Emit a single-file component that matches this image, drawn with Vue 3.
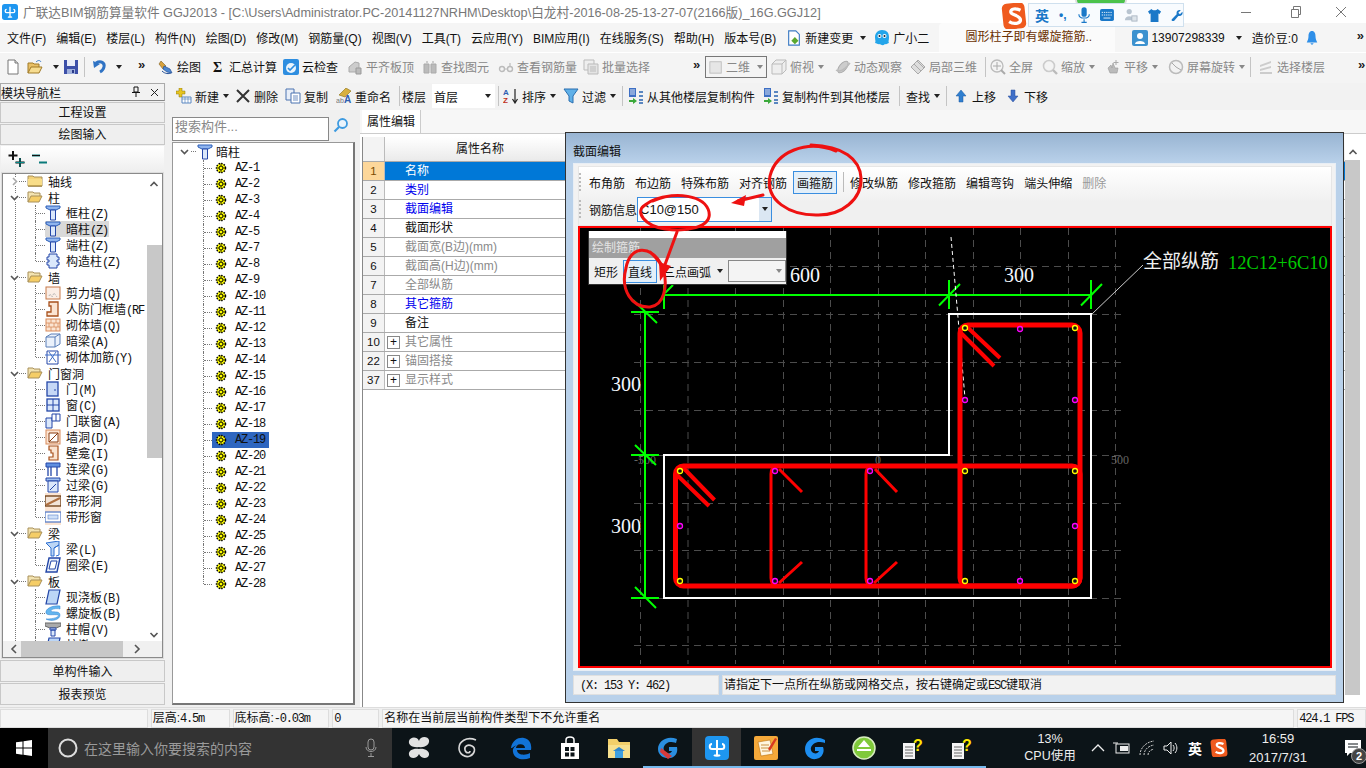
<template>
  <div class="app">
    <svg class="sprite" width="0" height="0">
      <symbol id="doc" viewBox="0 0 16 16"><path d="M3 1h7l3 3v11H3z" fill="#fff" stroke="#777"/><path d="M10 1v3h3" fill="#ddd" stroke="#777"/></symbol>
      <symbol id="open" viewBox="0 0 16 16"><path d="M1 14V4h5l1 1h5v3" fill="#e8c067" stroke="#a07a28"/><path d="M1 14l3-6h11l-3 6z" fill="#f6dc90" stroke="#a07a28"/><path d="M9 3c2-2 4-2 5 0" fill="none" stroke="#3a7bc8"/></symbol>
      <symbol id="save" viewBox="0 0 16 16"><path d="M1 1h14v14H1z" fill="#3c4fa8"/><path d="M4 1h8v6H4z" fill="#e8ecf8"/><path d="M4 10h8v5H4z" fill="#9fb0dc"/><path d="M9 11h2v3H9z" fill="#2a3a88"/></symbol>
      <symbol id="undo" viewBox="0 0 16 16"><path d="M4 4c5-3 9 0 8 4-.5 2-2 4-4 5" fill="none" stroke="#2f73c4" stroke-width="3"/><path d="M1 2l1 7 6-4z" fill="#2f73c4"/></symbol>
      <symbol id="draw" viewBox="0 0 16 16"><path d="M3 2l5 5-3 3-4-5z" fill="#d8a23c" stroke="#7a5a20" stroke-width=".6"/><path d="M6 7l6 3 2 4-5-1-4-3z" fill="#4c86cf" stroke="#234f96" stroke-width=".7"/><path d="M4 12c3 3 7 3 9 2" fill="none" stroke="#234f96"/></symbol>
      <symbol id="cloud" viewBox="0 0 16 16"><rect x="0" y="0" width="16" height="16" rx="2" fill="#2e8ee0"/><circle cx="8" cy="9" r="5" fill="#eaf4fc"/><path d="M5 9l2 2 5-5" fill="none" stroke="#2e8ee0" stroke-width="1.6"/></symbol>
      <symbol id="flat" viewBox="0 0 16 16"><path d="M2 13V8l6-5 4 1v9z" fill="#ccc" stroke="#aaa"/><path d="M9 9h5v6H9z" fill="#bbb" stroke="#999"/></symbol>
      <symbol id="binoc" viewBox="0 0 16 16"><path d="M2 5h5v9H2zM9 5h5v9H9z" fill="#bbb" stroke="#aaa"/><path d="M4 2h2v3H4zM10 2h2v3h-2zM7 6h2v3H7z" fill="#ccc"/></symbol>
      <symbol id="glass" viewBox="0 0 16 16"><circle cx="4" cy="10" r="2.5" fill="none" stroke="#bbb" stroke-width="1.4"/><circle cx="12" cy="10" r="2.5" fill="none" stroke="#bbb" stroke-width="1.4"/><path d="M6 10h3M12 4v4" stroke="#bbb" stroke-width="1.2"/></symbol>
      <symbol id="batch" viewBox="0 0 16 16"><path d="M1 1h10v10H1z" fill="#eee" stroke="#bbb"/><path d="M5 5h10v10H5z" fill="#e4e4e4" stroke="#bbb"/><path d="M7 8h6M7 10h6M7 12h6" stroke="#bbb"/></symbol>
      <symbol id="plane" viewBox="0 0 16 16"><rect x="1" y="2" width="13" height="13" fill="#e6e6e6" stroke="#bbb"/></symbol>
      <symbol id="box3d" viewBox="0 0 16 16"><path d="M1 5l4-4h10v10l-4 4H1z" fill="#eee" stroke="#bbb"/><path d="M1 5h10v10M11 5l4-4" fill="none" stroke="#bbb"/></symbol>
      <symbol id="orbit" viewBox="0 0 16 16"><ellipse cx="8" cy="8" rx="3.5" ry="7" transform="rotate(40 8 8)" fill="#ccc" stroke="#aaa"/><path d="M1 11c4 3 10-2 14-7" fill="none" stroke="#bbb" stroke-width="1.5"/></symbol>
      <symbol id="local" viewBox="0 0 16 16"><path d="M1 8l7-7 7 7-7 7z" fill="#ddd" stroke="#aaa"/><path d="M4 5l7 7M7 2l7 7" stroke="#aaa"/></symbol>
      <symbol id="zfit" viewBox="0 0 16 16"><circle cx="7" cy="7" r="6" fill="#f4f4f4" stroke="#bbb" stroke-width="1.3"/><path d="M7 3v8M3 7h8" stroke="#aaa"/><path d="M11 11l4 4" stroke="#aaa" stroke-width="2"/></symbol>
      <symbol id="zoom" viewBox="0 0 16 16"><circle cx="7" cy="7" r="5.5" fill="#f4f4f4" stroke="#ccc" stroke-width="1.6"/><path d="M11 11l4 4" stroke="#bbb" stroke-width="2.4"/></symbol>
      <symbol id="pan" viewBox="0 0 16 16"><path d="M3 9l3-3 1 3 1-5 2 5 3 0-1 5H5z" fill="#bbb" stroke="#999" stroke-width=".6"/><path d="M11 1v5M8.5 3.500h5" stroke="#aaa"/></symbol>
      <symbol id="rot" viewBox="0 0 16 16"><circle cx="8" cy="8" r="6.500" fill="#f2f2f2" stroke="#bbb" stroke-width="1.500"/><path d="M8 8l5 3M4 4l4 4" stroke="#aaa"/></symbol>
      <symbol id="floor" viewBox="0 0 16 16"><path d="M2 6l11-4v2L2 8zM2 10l11-3v2L2 12zM2 13h12v2H2z" fill="#ccc"/></symbol>
      <symbol id="new" viewBox="0 0 16 16"><path d="M3 0h3v3h3v3H6v3H3V6H0V3h3z" fill="#e6c420" stroke="#8a7410" stroke-width=".5"/><path d="M6 9h9v6H6z" fill="#fff" stroke="#5a86c0"/><path d="M6 11h9M9 9v6M12 9v6" stroke="#5a86c0" stroke-width=".7"/></symbol>
      <symbol id="del" viewBox="0 0 16 16"><path d="M2 2l12 12M14 2L2 14" stroke="#333" stroke-width="2"/></symbol>
      <symbol id="copy" viewBox="0 0 16 16"><path d="M1 1h8v11H1z" fill="#e8eef8" stroke="#4a72b0"/><path d="M6 5h9v10H6z" fill="#fff" stroke="#4a72b0"/><path d="M8 8h5M8 10h5M8 12h5" stroke="#4a72b0" stroke-width=".8"/></symbol>
      <symbol id="rename" viewBox="0 0 16 16"><path d="M3 7l7-7 5 3-6 6z" fill="#d8b040" stroke="#8a7010" stroke-width=".6"/></symbol>
      <symbol id="sort" viewBox="0 0 16 16"><path d="M12 1v13M9.500 11l2.500 4 2.500-4" fill="none" stroke="#222" stroke-width="1.200"/></symbol>
      <symbol id="filter" viewBox="0 0 16 16"><path d="M1 1h14L10 8v7l-4-2V8z" fill="#5fb0e8" stroke="#2a6fb0"/></symbol>
      <symbol id="cpfrom" viewBox="0 0 16 16"><path d="M1 0h7v9H1z" fill="#3d6fc4"/><path d="M2 2h5M2 4h5M2 6h5" stroke="#fff" stroke-width=".8"/><path d="M1 12h4v-2l4 3-4 3v-2H1z" fill="#3aa83a"/><path d="M11 3h4v2h-4zM11 7h4v2h-4zM11 11h4v2h-4zM11 14h4v2h-4z" fill="#5a86c0"/></symbol>
      <symbol id="up" viewBox="0 0 16 16"><path d="M8 2l5 6h-3v6H6V8H3z" fill="#2f7fd0" stroke="#1c5aa0" stroke-width=".5"/></symbol>
      <symbol id="down" viewBox="0 0 16 16"><path d="M8 14l5-6h-3V2H6v6H3z" fill="#3f6fc8" stroke="#2a4f98" stroke-width=".5"/></symbol>
      <symbol id="change" viewBox="0 0 16 18"><path d="M2 1h8l4 4v12H2z" fill="#fff" stroke="#3e7cc4" stroke-width="1.300"/><path d="M9 8l4 4-4 4-4-4z" fill="#5aa82e"/></symbol>
      <symbol id="xiao" viewBox="0 0 16 16"><path d="M8 0c5 0 7 3 7 7s-1 4 0 6c-2 0-2 2-4 1-2 2-4 1-5 0-2 1-3-1-5-1 1-2 0-3 0-6s2-7 7-7z" fill="#23a5ea"/><circle cx="5.500" cy="6" r="2" fill="#fff"/><circle cx="10.500" cy="6" r="2" fill="#fff"/><circle cx="5.500" cy="6" r="1" fill="#123"/><circle cx="10.500" cy="6" r="1" fill="#123"/></symbol>
      <symbol id="user" viewBox="0 0 16 16"><rect width="16" height="16" rx="2" fill="#3d92cf"/><circle cx="8" cy="6" r="3" fill="#fff"/><path d="M3 14c0-4 10-4 10 0z" fill="#fff"/></symbol>
      <symbol id="bell" viewBox="0 0 16 16"><path d="M8 0c3 0 4 3 4 6s1 5 2 7H2c1-2 2-4 2-7s1-6 4-6z" fill="#2f8fe8"/><path d="M6 14h4l-2 2z" fill="#2f8fe8"/></symbol>

      <symbol id="fclosed" viewBox="0 0 16 16"><path d="M1 13V3h5l1 1h8v9z" fill="#f3d27a" stroke="#a8905a"/><path d="M1 6h14v7H1z" fill="#f8dd88"/><path d="M1 13h14" stroke="#8a6a20"/></symbol>
      <symbol id="fopen" viewBox="0 0 16 16"><path d="M1 13V3h5l1 1h6v3" fill="#f3e3b0" stroke="#a8905a"/><path d="M1 13l3-6h11l-3 6z" fill="#f5cd66" stroke="#a8905a"/></symbol>
      <symbol id="col" viewBox="0 0 16 16"><path d="M1 1h14v2l-4 2H5L1 3z" fill="#8fb4ee" stroke="#2d5fb8"/><path d="M5.500 5h5v10h-5z" fill="#dbe8fb" stroke="#2447a8"/></symbol>
      <symbol id="gz" viewBox="0 0 16 16"><path d="M4 1h8v3h2v3h-2v2h2v3h-2v3H4v-3H2V9h2V7H2V4h2z" fill="#dbe8fb" stroke="#2447a8"/></symbol>
      <symbol id="shear" viewBox="0 0 16 16"><rect x="1" y="2" width="14" height="12" fill="#fbeee6" stroke="#c87a4a"/><path d="M4 11l1-2 2 3 2-4 3 4" stroke="#aaa" stroke-dasharray="1 1" fill="none"/></symbol>
      <symbol id="frame" viewBox="0 0 16 16"><path d="M4 1h9v14H2v-4h4V5H4z" fill="#fbe4d2" stroke="#a8501c" stroke-width="1.300"/></symbol>
      <symbol id="brick" viewBox="0 0 16 16"><rect x="1" y="2" width="14" height="12" fill="#fbe4d2" stroke="#d88a5a"/><path d="M1 6h14M1 10h14M6 2v4M11 2v4M4 6v4M9 6v4M13 6v4M6 10v4M11 10v4" stroke="#d88a5a" stroke-width=".8"/></symbol>
      <symbol id="abeam" viewBox="0 0 16 16"><path d="M1 4l5-3h9v10l-5 3H1z" fill="#eaf1fb" stroke="#5a7fb8"/><path d="M1 4h9v10M10 4l5-3" fill="none" stroke="#5a7fb8"/></symbol>
      <symbol id="rebar" viewBox="0 0 16 16"><path d="M2 2h11v13H2z" fill="#fff" stroke="#2447a8"/><path d="M0 6h16M4 3l7 10M11 3L4 13" stroke="#3f6fc8"/></symbol>
      <symbol id="door" viewBox="0 0 16 16"><rect x="2" y="1" width="11" height="14" fill="#c6d8f6" stroke="#2447a8" stroke-width="1.300"/><path d="M10 8v2" stroke="#2447a8"/></symbol>
      <symbol id="win" viewBox="0 0 16 16"><rect x="2" y="2" width="12" height="12" fill="#dbe8fb" stroke="#2447a8" stroke-width="1.300"/><path d="M8 2v12M2 8h12" stroke="#2447a8"/></symbol>
      <symbol id="doorwin" viewBox="0 0 16 16"><path d="M1 5h6v10H1z" fill="#dbe8fb" stroke="#2447a8"/><path d="M7 1h8v7H7z" fill="#fff" stroke="#2447a8"/><path d="M11 1v7" stroke="#2447a8"/></symbol>
      <symbol id="hole" viewBox="0 0 16 16"><rect x="1" y="1" width="14" height="14" fill="#fbe4d2" stroke="#d88a5a"/><path d="M4 4h9v9H4z" fill="#fff" stroke="#8a3c10"/><path d="M4 13l9-9" stroke="#8a3c10"/></symbol>
      <symbol id="niche" viewBox="0 0 16 16"><path d="M4 1h9v14H4v-3h4V8h-2V5h-2z" fill="#fbe4d2" stroke="#a8501c" stroke-width="1.200"/></symbol>
      <symbol id="lian" viewBox="0 0 16 16"><path d="M1 2h14v4H1z" fill="#5f8fe0" stroke="#2447a8"/><path d="M3 6v9M12 6v9M6 6v9" stroke="#2447a8" stroke-width="1.300"/></symbol>
      <symbol id="guo" viewBox="0 0 16 16"><path d="M1 1h14v3H1z" fill="#9fc0f0" stroke="#2447a8"/><path d="M3 4h10v11H3z" fill="#dbe8fb" stroke="#2447a8"/><path d="M5 13l6-6" stroke="#2447a8"/></symbol>
      <symbol id="band" viewBox="0 0 16 16"><rect y="0" width="16" height="16" fill="#fbe4d2"/><rect x="0" y="3" width="16" height="10" fill="#f2e4d8" stroke="#6a3a10" stroke-width="1.300"/><path d="M1 12L15 5" stroke="#b07040" stroke-width="2"/></symbol>
      <symbol id="bandw" viewBox="0 0 16 16"><rect y="0" width="16" height="16" fill="#fbe4d2"/><rect x="0" y="3" width="16" height="10" fill="#fff" stroke="#5a7fc8" stroke-width="1.300"/><rect x="3" y="6" width="10" height="4" fill="#cfe0f8" stroke="#5a7fc8" stroke-width=".6"/></symbol>
      <symbol id="beam" viewBox="0 0 16 16"><path d="M1 2l13-2v4l-5 3v8H6V7z" fill="#bcd6f6" stroke="#2e6fd0"/><path d="M9 7l5-3v10l-3 1" fill="none" stroke="#2e6fd0"/></symbol>
      <symbol id="ring" viewBox="0 0 16 16"><path d="M4 1h11l-3 14H1z" fill="#eaf1fb" stroke="#2447a8" stroke-width="1.400"/><path d="M6 4h6l-2 8H4z" fill="#fff" stroke="#2447a8"/></symbol>
      <symbol id="slab" viewBox="0 0 16 16"><path d="M4 1h11l-3 14H1z" fill="#bcd6f6" stroke="#2447a8" stroke-width="1.200"/></symbol>
      <symbol id="spiral" viewBox="0 0 16 16"><path d="M15 1C7 0 0 4 1 8c1 3 8 1 12 2 2 1-2 4-12 4 5 3 14 1 14-4S6 8 6 6s5-3 9-2z" fill="#63b5ee" stroke="#2e7fd0" stroke-width=".5"/></symbol>
      <symbol id="cap" viewBox="0 0 16 16"><path d="M0 2h16v3l-5 2H5L0 5z" fill="#aaa" stroke="#666"/><path d="M5 7h6v2H5zM6 9h4v6H6z" fill="#dbe8fb" stroke="#2447a8"/></symbol>
      <symbol id="az" viewBox="0 0 16 16"><circle cx="7" cy="8" r="4.500" fill="#ff0" stroke="#000" stroke-width="1.500" stroke-dasharray="1.500 1.100"/><path d="M7 3v10M2 8h10" stroke="#000" stroke-width=".6"/><circle cx="7" cy="8" r="2" fill="#ff0" stroke="#000"/></symbol>

      <symbol id="t-fan" viewBox="0 0 24 24"><path d="M12 11C6 12 1 9 2 5c1-4 8-5 10 0 1-5 9-5 10-1 1 5-5 8-10 7zM12 13c5-1 11 2 10 6-1 4-8 4-10-1-2 5-9 5-10 1-1-5 5-7 10-6z" fill="#e2e2e2"/></symbol>
      <symbol id="t-swirl" viewBox="0 0 24 24"><path d="M20 4C10 0 3 6 3 12s6 10 11 8 6-8 2-10-8 0-7 4 5 3 5 1" fill="none" stroke="#d8d8d8" stroke-width="1.600"/></symbol>
      <symbol id="t-edge" viewBox="0 0 24 24"><path d="M2 12C3 4 10 1 15 2c6 1 8 7 7 12H8c0 5 8 6 13 3v5c-7 3-16 1-17-6-1-4 3-7 6-8-2 1-3 3-3 4h9c0-4-6-6-13 0z" fill="#1173d8"/></symbol>
      <symbol id="t-store" viewBox="0 0 24 24"><path d="M3 7h18v16H3z" fill="#fff"/><path d="M8 7V4c0-4 8-4 8 0v3" fill="none" stroke="#fff" stroke-width="1.500"/><path d="M7 11h4v4H7zM12.500 11h4v4h-4zM7 16.500h4v4H7zM12.500 16.500h4v4h-4z" fill="#0c1418"/></symbol>
      <symbol id="t-folder" viewBox="0 0 24 24"><path d="M1 3h9l2 3h11v16H1z" fill="#f2cf6a"/><path d="M1 9h22v13H1z" fill="#f7e08e"/><path d="M8 15h8v7H8z" fill="#3f9fe0"/><path d="M6 15l6-4 6 4z" fill="#2f86cc"/></symbol>
      <symbol id="t-gred" viewBox="0 0 24 24"><path d="M21 3C11-1 2 5 2 13c0 7 7 10 12 9 6-1 8-6 7-11h-8v4h3c-1 3-5 3-7 1-3-3-1-9 5-10 2 0 4 0 6 1z" fill="#2a8ee0"/><path d="M5 12l11 8-4 3-8-7z" fill="#d83a3a"/></symbol>
      <symbol id="t-gld" viewBox="0 0 24 24"><rect width="24" height="24" rx="4" fill="#1e96f0"/><path d="M12 4v16M7 8c-3 0-3 5 0 5h10c3 0 3-5 0-5M9 19c1 1 5 1 6 0" fill="none" stroke="#fff" stroke-width="2"/></symbol>
      <symbol id="t-note" viewBox="0 0 24 24"><rect width="24" height="24" rx="2" fill="#f5a93a"/><path d="M4 6l12-2 3 14-12 2z" fill="#fff6e0" stroke="#b87010" stroke-width=".6"/><path d="M7 9h8M7 12h8M8 15h8" stroke="#c89040"/><path d="M14 13l7-11 2 1-7 12z" fill="#d83a20"/></symbol>
      <symbol id="t-gblue" viewBox="0 0 24 24"><path d="M22 4C11-2 2 5 2 13c0 7 6 11 11 10 6-1 9-7 7-12h-8v4h4c-1 3-5 3-7 1-3-3 0-9 6-10 3 0 5 0 7 1z" fill="#1d8ef0"/></symbol>
      <symbol id="t-green" viewBox="0 0 24 24"><circle cx="12" cy="12" r="11" fill="#7fc93a" stroke="#d8ecc0" stroke-width="1.500"/><path d="M12 4l6 7H6zM5 13h14v2H5z" fill="#fff"/></symbol>
      <symbol id="t-qdoc" viewBox="0 0 24 24"><path d="M2 7h12v16H2z" fill="#f4f4f4"/><path d="M4 11h8M4 14h8M4 17h8M4 20h8" stroke="#666"/></symbol>
      <symbol id="t-s" viewBox="0 0 16 16"><rect x="1" y="0" width="14" height="16" rx="3" fill="#ef5a1e" transform="rotate(-6 8 8)"/><path d="M12 4.500c-3-1.500-6-1-6 1s6 2 6 5c0 2-4 3-7 1" fill="none" stroke="#fff" stroke-width="2"/></symbol>
    </svg>

    <header class="title-bar">
      <svg class="app-ico" viewBox="0 0 24 24"><use href="#t-gld" /></svg>
      <span class="title-text">广联达BIM钢筋算量软件 GGJ2013 - [C:\Users\Administrator.PC-20141127NRHM\Desktop\白龙村-2016-08-25-13-27-07(2166版)_16G.GGJ12]</span>
      <div class="win-btns">
        <svg width="12" height="12" viewBox="0 0 12 12"><path d="M1 6.500h10" stroke="#777" /></svg>
        <svg width="12" height="12" viewBox="0 0 12 12"><path d="M1.500 3.500h7v8h-7zM3.500 3V.5h7v8H9" fill="none" stroke="#777" /></svg>
        <svg width="12" height="12" viewBox="0 0 12 12"><path d="M1 1l10 10M11 1L1 11" stroke="#777" /></svg>
      </div>
    </header>

    <nav class="menu-bar">
      <span v-for="m in menus" :key="m">{{ m }}</span>
      <span class="menu-ico"><svg class="ic" viewBox="0 0 16 18"><use href="#change" /></svg>新建变更<i class="tri"></i></span>
      <span class="menu-ico gx"><svg class="ic" viewBox="0 0 16 16"><use href="#xiao" /></svg>广小二</span>
      <span class="hint">圆形柱子即有螺旋箍筋..</span>
      <span class="menu-ico"><svg class="ic" viewBox="0 0 16 16"><use href="#user" /></svg>13907298339<i class="tri ml"></i></span>
      <span class="bean">造价豆:0</span>
      <svg class="ic bell" viewBox="0 0 16 16"><use href="#bell" /></svg>
      <span class="more end">»</span>
    </nav>

    <div class="tool-bar">
      <template v-for="(it, i) in tools1" :key="i">
        <div class="tb-item" :class="{ dis: it.d }" :style="{ width: it.w + 'px' }">
          <span v-if="it.sep" class="sep"></span>
          <span v-else-if="it.more" class="more">»</span>
          <span v-else-if="it.combo" class="combo-2d"><svg class="ic" viewBox="0 0 16 16"><use href="#plane" /></svg>二维<i class="tri gray"></i></span>
          <template v-else>
            <svg v-if="it.i" class="ic" viewBox="0 0 16 16">
              <use :href="'#' + it.i" />
              <text v-if="it.i === 'sigma'" x="3" y="13" font-size="14" font-weight="700" font-family="Liberation Serif" fill="#111">Σ</text>
            </svg>
            <span v-if="it.t" class="tb-t">{{ it.t }}</span>
            <i v-if="it.a" class="tri" :class="{ gray: it.d }"></i>
          </template>
        </div>
      </template>
    </div>

    <div class="body">
      <aside class="nav">
        <div class="nav-head">模块导航栏
          <svg class="pin" width="10" height="12" viewBox="0 0 10 12"><path d="M3 1h4v5H3zM1 6.500h8M5 7v4" fill="none" stroke="#111" /></svg>
          <svg width="9" height="9" viewBox="0 0 9 9"><path d="M1 1l7 7M8 1L1 8" stroke="#222" /></svg>
        </div>
        <div class="nav-btn first">工程设置</div>
        <div class="nav-btn">绘图输入</div>
        <div class="nav-exp">
          <svg width="48" height="20" viewBox="0 0 48 20"><path d="M6 1v9M1.500 5.500h9M13 8v9M8.500 12.500h9" stroke="#111" stroke-width="2" /><path d="M13 8v9M8.500 12.500h9" stroke="#0a8a8a" stroke-width="1" /><path d="M25 5.500h8M32 12.500h8" stroke="#0a7a7a" stroke-width="2" /><path d="M25 5.500h8" stroke="#111" stroke-width="1" /></svg>
        </div>
        <div class="nav-box">
          <div class="nav-view">
            <div class="groups">
              <div v-for="g in navTree" :key="g.name" class="group">
                <div class="g-row">
                  <svg class="chev" width="9" height="9" viewBox="0 0 9 9"><path :d="g.closed ? 'M3 1l3.500 3.500L3 8' : 'M1 3l3.500 3.500L8 3'" fill="none" :stroke="g.closed ? '#aaa' : '#555'" stroke-width="1.600" /></svg>
                  <span class="dots d1"></span>
                  <svg class="ic" viewBox="0 0 16 16"><use :href="g.closed ? '#fclosed' : '#fopen'" /></svg>
                  <span class="g-name">{{ g.name }}</span>
                </div>
                <div v-if="g.kids.length" class="kids">
                  <div v-for="k in g.kids" :key="k.n" class="kid">
                    <span class="dots d2"></span>
                    <span class="kid-lab" :class="{ sel: k.sel }">
                      <svg class="ic" viewBox="0 0 16 16"><use :href="'#' + k.i" /></svg>
                      <span class="kid-t">{{ k.n }}<span class="mono">{{ k.c }}</span></span>
                    </span>
                  </div>
                </div>
              </div>
            </div>
          </div>
          <div class="vbar">
            <svg width="16" height="12" viewBox="0 0 16 12"><path d="M4.500 8L8 4.500 11.500 8" fill="none" stroke="#555" stroke-width="1.600" /></svg>
            <div class="vtrack"><div class="vthumb"></div></div>
            <svg width="16" height="12" viewBox="0 0 16 12"><path d="M4.500 4L8 7.500 11.500 4" fill="none" stroke="#555" stroke-width="1.600" /></svg>
          </div>
          <div class="hbar">
            <svg width="18" height="16" viewBox="0 0 18 16"><path d="M13 4L9 8l4 4" fill="none" stroke="#555" stroke-width="1.600" /></svg>
            <div class="hthumb"></div>
            <svg width="18" height="16" viewBox="0 0 18 16"><path d="M6 4l4 4-4 4" fill="none" stroke="#555" stroke-width="1.600" /></svg>
          </div>
        </div>
        <div class="nav-btn tall">单构件输入</div>
        <div class="nav-btn tall">报表预览</div>
      </aside>

      <section class="right">
        <div class="tool-bar second">
          <div v-for="(it, i) in tools2" :key="i" class="tb-item" :style="{ width: it.w + 'px' }">
            <span v-if="it.sep" class="sep"></span>
            <span v-else-if="it.combo" class="combo-floor">首层<i class="tri"></i></span>
            <template v-else>
              <svg v-if="it.i" class="ic" viewBox="0 0 16 16">
                <use :href="'#' + it.i" />
                <template v-if="it.i === 'rename'">
                  <text x="0" y="15" font-size="7" font-family="Liberation Sans" fill="#777">ab</text>
                  <text x="8" y="15" font-size="10" font-weight="700" font-family="Liberation Sans" fill="#2f5fb0">A</text>
                </template>
                <template v-if="it.i === 'sort'">
                  <text x="0" y="7" font-size="8" font-weight="700" font-family="Liberation Sans" fill="#2f5fb0">A</text>
                  <text x="0" y="15" font-size="8" font-weight="700" font-family="Liberation Sans" fill="#c03020">Z</text>
                </template>
              </svg>
              <span class="tb-t">{{ it.t }}</span>
              <i v-if="it.a" class="tri"></i>
            </template>
          </div>
        </div>
        <div class="work">
          <div class="list-col">
            <div class="search-row">
              <div class="search">搜索构件...</div>
              <svg width="16" height="16" viewBox="0 0 16 16"><circle cx="9.500" cy="6.500" r="4.500" fill="#eaf4fc" stroke="#3d9ae0" stroke-width="1.800" /><path d="M6 10l-4.500 4.500" stroke="#3d9ae0" stroke-width="2.200" /></svg>
            </div>
            <div class="list-box">
              <div class="root-row">
                <svg class="chev" width="9" height="9" viewBox="0 0 9 9"><path d="M1 3l3.500 3.500L8 3" fill="none" stroke="#555" stroke-width="1.600" /></svg>
                <span class="dots d3"></span>
                <svg class="ic" viewBox="0 0 16 16"><use href="#col" /></svg>
                <span class="root-t">暗柱</span>
              </div>
              <div class="az-list">
                <div v-for="a in azList" :key="a" class="az-row">
                  <span class="dots d4"></span>
                  <span class="az-lab" :class="{ on: a === 'AZ-19' }">
                    <svg class="ic" viewBox="0 0 16 16"><use href="#az" /></svg>
                    <span class="mono az-t">{{ a }}</span>
                  </span>
                </div>
              </div>
            </div>
          </div>

          <div class="props">
            <div class="tab-row"><div class="tab">属性编辑</div></div>
            <div class="props-main">
              <div class="table">
                <div class="t-head"><div class="t-no"></div><div class="t-name">属性名称</div></div>
                <div v-for="(r, i) in props" :key="r.no" class="t-row" :class="{ cur: i === 0 }">
                  <div class="t-no">{{ r.no }}</div>
                  <div class="t-cell" :class="r.c">
                    <span v-if="r.plus" class="plus">+</span>
                    <span class="t-val">{{ r.t }}</span>
                  </div>
                </div>
              </div>
              <div class="pbar">
                <svg width="14" height="14" viewBox="0 0 14 14"><path d="M3.500 9L7 5.500 10.500 9" fill="none" stroke="#555" stroke-width="1.600" /></svg>
                <div class="pthumb"></div>
              </div>
            </div>
          </div>
        </div>
      </section>
    </div>

    <footer class="status">
      <div class="st s0"></div>
      <div class="st s1">层高:<span class="mono">4.5m</span></div>
      <div class="st s2">底标高:<span class="mono">-0.03m</span></div>
      <div class="st s3"><span class="mono">0</span></div>
      <div class="st s4">名称在当前层当前构件类型下不允许重名</div>
      <div class="st s5"><span class="mono">424.1 FPS</span></div>
    </footer>

    <div class="taskbar">
      <div class="start">
        <svg width="16" height="16" viewBox="0 0 16 16"><path d="M0 2.300l6.500-.9v6.200H0zM7.500 1.200L16 0v7.600H7.500zM0 8.500h6.500v6.200L0 13.800zM7.500 8.500H16V16l-8.500-1.200z" fill="#fff" /></svg>
      </div>
      <div class="tsearch">
        <svg width="22" height="22" viewBox="0 0 22 22"><circle cx="11" cy="11" r="8.500" fill="none" stroke="#ddd" stroke-width="2" /></svg>
        <span class="ts-text">在这里输入你要搜索的内容</span>
        <svg class="mic" width="12" height="20" viewBox="0 0 12 20"><rect x="3" y="1" width="6" height="11" rx="3" fill="none" stroke="#999" /><path d="M1 9c0 6 10 6 10 0M6 15v3M3 18.500h6" fill="none" stroke="#999" /></svg>
      </div>
      <div class="tasks">
        <div v-for="(t, i) in tasks" :key="i" class="task" :class="{ run: t.run, act: t.act, shift: t.i === 't-edge' }">
          <svg width="24" height="24" viewBox="0 0 24 24">
            <use :href="'#' + t.i" />
            <text v-if="t.i === 't-qdoc'" x="12" y="15" font-size="16" font-weight="700" font-family="Liberation Sans" fill="#ffe600">?</text>
          </svg>
        </div>
      </div>
      <div class="cpu"><span>13%</span><span>CPU使用</span></div>
      <div class="tray">
        <svg width="14" height="10" viewBox="0 0 14 10"><path d="M1 8l6-6 6 6" fill="none" stroke="#eee" stroke-width="1.300" /></svg>
        <svg width="18" height="14" viewBox="0 0 18 14"><rect x="3" y="3" width="13" height="9" fill="none" stroke="#eee" /><rect x="7" y="5" width="8" height="5" fill="#eee" /><path d="M0 2h5" stroke="#eee" /></svg>
        <svg width="16" height="16" viewBox="0 0 16 16"><path d="M1 15C1 8 7 2 15 1M5 15c0-5 4-9 10-10M9 15c0-3 2-5 6-6" fill="none" stroke="#ccc" stroke-dasharray="2 1" /></svg>
        <svg width="16" height="16" viewBox="0 0 16 16"><path d="M1 6h3l4-4v12l-4-4H1z" fill="none" stroke="#eee" /><path d="M10 5c1.500 2 1.500 4 0 6M12 3c2.500 3 2.500 7 0 10" fill="none" stroke="#eee" /></svg>
        <span class="ime">英</span>
        <svg width="18" height="18" viewBox="0 0 16 16"><use href="#t-s" /></svg>
      </div>
      <div class="clock"><span>16:59</span><span>2017/7/31</span></div>
      <div class="notify">
        <svg width="18" height="18" viewBox="0 0 18 18"><path d="M1 1h16v13H6l-3 3v-3H1z" fill="#fff" /><path d="M4 5h10M4 8h10" stroke="#0c1418" /></svg>
        <span class="badge">2</span>
      </div>
    </div>

    <div class="dialog">
      <div class="dlg-title">截面编辑</div>
      <div class="dlg-body">
        <div class="dlg-tools">
          <div class="dt-row">
            <span class="grip"></span>
            <span v-for="b in dlgBtns1" :key="b">{{ b }}</span>
            <span class="dt-on">画箍筋</span>
            <span class="dt-sep"></span>
            <span v-for="b in dlgBtns2" :key="b">{{ b }}</span>
            <span class="dt-dis">删除</span>
          </div>
          <div class="dt-row">
            <span class="grip"></span>
            <span>钢筋信息</span>
            <div class="bar-combo"><span>C10@150</span><span class="bc-drop"><i class="tri"></i></span></div>
          </div>
        </div>
        <div class="canvas">
          <svg class="draw" viewBox="580 228 750 438">
            <g stroke="#4c4c4c" stroke-dasharray="7 5" stroke-width="1">
              <path v-for="x in gridX" :key="x" :d="`M${x} 228V664`" />
              <path v-for="y in gridY" :key="y" :d="`M634 ${y}H1123`" />
            </g>
            <g fill="#666" font-size="12" font-family="Liberation Serif">
              <text x="634" y="464">-500</text><text x="875" y="464">0</text><text x="1111" y="464">500</text>
            </g>
            <path d="M949 314H1091V598H664V455H949Z" fill="none" stroke="#fff" stroke-width="2" />
            <path d="M1092 314L1143 265" stroke="#fff" stroke-width=".8" />
            <g stroke="#00ff00" stroke-width="2" fill="none">
              <path d="M664 295H1091M664 285V309M949 280V309M1091 280V309M665 293l8-8M939 305.500l21-21.500M1081 305.500l21-21.500" />
              <path d="M645 312V598M631 312H659M631 455H659M631 598H659M633 300l24 23M635 445l21 20M635 587l21 21" />
            </g>
            <path d="M951 237L965 398" stroke="#fff" stroke-dasharray="4 3" stroke-width="1" fill="none" />
            <path d="M960 340l1 16" stroke="#00e0e0" stroke-dasharray="3 2" />
            <g fill="none" stroke="#f00">
              <rect x="960" y="325" width="120" height="261" rx="8" stroke-width="5" />
              <rect x="675.500" y="466" width="404.500" height="120" rx="8" stroke-width="5" />
              <path d="M783 466h-4q-8 0-8 8v104q0 8 8 8h4M878 466h-4q-8 0-8 8v104q0 8 8 8h4" stroke-width="3" />
              <path d="M966 326l34 32M961 333l33 33M682.500 467l32 33M677 475l32 31" stroke-width="4" />
              <path d="M779 469l23 23M779 583l23-21M875 469l22 23M874 583l23-21" stroke-width="3" />
            </g>
            <g fill="#111" stroke-width="1.300">
              <circle v-for="p in barsY" :key="p.join()" :cx="p[0]" :cy="p[1]" r="2.500" stroke="#ff0" />
              <circle v-for="p in barsM" :key="p.join()" :cx="p[0]" :cy="p[1]" r="2.500" stroke="#f0f" />
            </g>
            <g class="dim" fill="#f4f8ff" font-size="20" font-family="Liberation Serif">
              <text x="790" y="282">600</text><text x="1004" y="282">300</text>
              <text x="611" y="391">300</text><text x="611" y="533">300</text>
            </g>
            <text x="1143" y="268" fill="#f0f0f0" font-size="19" font-family="Liberation Serif, Noto Sans CJK SC">全部纵筋</text>
            <text x="1228" y="269" fill="#00c800" font-size="18.500" font-family="Liberation Serif">12C12+6C10</text>
          </svg>
          <div class="popup">
            <div class="pop-title">绘制箍筋</div>
            <div class="pop-row">
              <span>矩形</span>
              <span class="pop-on">直线</span>
              <span class="pop-arc">三点画弧</span>
              <i class="tri"></i>
              <span class="pop-combo"><i class="tri gray"></i></span>
            </div>
          </div>
        </div>
      </div>
      <div class="dlg-status">
        <div class="ds-a"><span class="mono">(X: 153 Y: 462)</span></div>
        <div class="ds-b">请指定下一点所在纵筋或网格交点，按右键确定或<span class="mono">ESC</span>键取消</div>
      </div>
    </div>

    <svg class="marks" width="1366" height="768" viewBox="0 0 1366 768">
      <g fill="none" stroke="#ee1111" stroke-width="3" stroke-linecap="round">
        <path d="M836 151C806 139 776 152 770 176C765 201 790 215 816 215C842 216 862 199 861 178C860 159 843 146 811 145" />
        <path d="M653 201C675 191 705 195 709 212C712 228 685 232 665 229C645 226 634 212 645 205C650 201 660 197 670 196" />
        <path d="M661 264C651 245 630 245 626 268C620 290 632 308 650 307C665 305 667 285 664 272C662 265 657 258 650 252" />
        <path d="M763 195L738 201M677 232L663 270" />
      </g>
      <path d="M731 203L746 195L744 206ZM660 281L659 262L671 266Z" fill="#ee1111" />
    </svg>

    <div class="ime-bump"></div>
    <div class="ime-bar">
      <svg class="ime-s" width="28" height="26" viewBox="0 0 16 16"><use href="#t-s" /></svg>
      <span class="ime-en">英</span>
      <span class="ime-dot">•,</span>
      <svg width="14" height="18" viewBox="0 0 14 18"><rect x="4" y="0" width="6" height="11" rx="3" fill="#1a78c8" /><path d="M1 8c0 6 12 6 12 0M7 14v3M4 17.500h6" fill="none" stroke="#1a78c8" stroke-width="1.300" /></svg>
      <svg width="16" height="14" viewBox="0 0 16 14"><rect width="16" height="14" rx="2" fill="#1a78c8" /><path d="M2 4h12M2 7h12" stroke="#fff" stroke-dasharray="1.500 1" /><path d="M4 10.500h8" stroke="#fff" /></svg>
      <svg width="16" height="16" viewBox="0 0 16 16"><circle cx="6" cy="4" r="3" fill="#b8c4d0" /><path d="M1 14c0-6 10-6 10 0z" fill="#b8c4d0" /><rect x="9" y="9" width="6" height="6" fill="#dde4ea" stroke="#a8b4c0" /></svg>
      <svg width="15" height="15" viewBox="0 0 15 15"><path d="M4 0L0 3l2 3 1-1v10h9V5l1 1 2-3-4-3c-1 2-6 2-7 0z" fill="#1a78c8" /></svg>
      <svg width="14" height="15" viewBox="0 0 15 15"><path d="M14 3l-3 3-2-2 3-3c-3-1-6 1-5 5L1 12c-1 2 1 3 3 2l5-6c4 1 6-2 5-5z" fill="#1a78c8" /></svg>
    </div>
  </div>
</template>

<script setup>
const menus = ["文件(F)", "编辑(E)", "楼层(L)", "构件(N)", "绘图(D)", "修改(M)", "钢筋量(Q)", "视图(V)", "工具(T)", "云应用(Y)", "BIM应用(I)", "在线服务(S)", "帮助(H)", "版本号(B)"];

// w = 到下一项起点的距离
const tools1 = [
  { w: 5 },
  { i: "doc", w: 22 },
  { i: "open", w: 22 },
  { a: 1, w: 14 },
  { i: "save", w: 21 },
  { sep: 1, w: 8 },
  { i: "undo", w: 20 },
  { a: 1, w: 26 },
  { more: 1, w: 15 },
  { w: 5 },
  { i: "draw", t: "绘图", w: 52 },
  { i: "sigma", t: "汇总计算", w: 73 },
  { i: "cloud", t: "云检查", w: 64 },
  { i: "flat", t: "平齐板顶", w: 75, d: 1 },
  { i: "binoc", t: "查找图元", w: 76, d: 1 },
  { i: "glass", t: "查看钢筋量", w: 85, d: 1 },
  { i: "batch", t: "批量选择", w: 110, d: 1 },
  { more: 1, w: 12 },
  { combo: 1, w: 66 },
  { i: "box3d", t: "俯视", a: 1, w: 64, d: 1 },
  { i: "orbit", t: "动态观察", w: 75, d: 1 },
  { i: "local", t: "局部三维", w: 75, d: 1 },
  { sep: 1, w: 5 },
  { i: "zfit", t: "全屏", w: 52, d: 1 },
  { i: "zoom", t: "缩放", a: 1, w: 63, d: 1 },
  { i: "pan", t: "平移", a: 1, w: 63, d: 1 },
  { i: "rot", t: "屏幕旋转", a: 1, w: 82, d: 1 },
  { sep: 1, w: 8 },
  { i: "floor", t: "选择楼层", w: 100, d: 1 },
  { more: 1, w: 10 },
];

const tools2 = [
  { i: "new", t: "新建", a: 1, w: 59 },
  { i: "del", t: "删除", w: 50 },
  { i: "copy", t: "复制", w: 51 },
  { i: "rename", t: "重命名", w: 63 },
  { sep: 1, w: 3 },
  { t: "楼层", w: 30 },
  { combo: 1, w: 66 },
  { sep: 1, w: 5 },
  { i: "sort", t: "排序", a: 1, w: 60 },
  { i: "filter", t: "过滤", a: 1, w: 59 },
  { sep: 1, w: 6 },
  { i: "cpfrom", t: "从其他楼层复制构件", w: 135 },
  { i: "cpfrom", t: "复制构件到其他楼层", w: 136 },
  { sep: 1, w: 7 },
  { t: "查找", a: 1, w: 40 },
  { sep: 1, w: 7 },
  { i: "up", t: "上移", w: 52 },
  { i: "down", t: "下移", w: 50 },
];

const navTree = [
  { name: "轴线", closed: true, kids: [] },
  { name: "柱", kids: [
    { n: "框柱", c: "(Z)", i: "col" },
    { n: "暗柱", c: "(Z)", i: "col", sel: true },
    { n: "端柱", c: "(Z)", i: "col" },
    { n: "构造柱", c: "(Z)", i: "gz" },
  ] },
  { name: "墙", kids: [
    { n: "剪力墙", c: "(Q)", i: "shear" },
    { n: "人防门框墙", c: "(RF", i: "frame" },
    { n: "砌体墙", c: "(Q)", i: "brick" },
    { n: "暗梁", c: "(A)", i: "abeam" },
    { n: "砌体加筋", c: "(Y)", i: "rebar" },
  ] },
  { name: "门窗洞", kids: [
    { n: "门", c: "(M)", i: "door" },
    { n: "窗", c: "(C)", i: "win" },
    { n: "门联窗", c: "(A)", i: "doorwin" },
    { n: "墙洞", c: "(D)", i: "hole" },
    { n: "壁龛", c: "(I)", i: "niche" },
    { n: "连梁", c: "(G)", i: "lian" },
    { n: "过梁", c: "(G)", i: "guo" },
    { n: "带形洞", c: "", i: "band" },
    { n: "带形窗", c: "", i: "bandw" },
  ] },
  { name: "梁", kids: [
    { n: "梁", c: "(L)", i: "beam" },
    { n: "圈梁", c: "(E)", i: "ring" },
  ] },
  { name: "板", kids: [
    { n: "现浇板", c: "(B)", i: "slab" },
    { n: "螺旋板", c: "(B)", i: "spiral" },
    { n: "柱帽", c: "(V)", i: "cap" },
    { n: "柱墩", c: "(V)", i: "slab" },
  ] },
];

const azList = [1, 2, 3, 4, 5, 7, 8, 9, 10, 11, 12, 13, 14, 15, 16, 17, 18, 19, 20, 21, 22, 23, 24, 25, 26, 27, 28].map((n) => "AZ-" + n);

const props = [
  { no: 1, t: "名称", c: "sel" },
  { no: 2, t: "类别", c: "blue" },
  { no: 3, t: "截面编辑", c: "blue" },
  { no: 4, t: "截面形状", c: "black" },
  { no: 5, t: "截面宽(B边)(mm)", c: "gray" },
  { no: 6, t: "截面高(H边)(mm)", c: "gray" },
  { no: 7, t: "全部纵筋", c: "gray" },
  { no: 8, t: "其它箍筋", c: "blue" },
  { no: 9, t: "备注", c: "black" },
  { no: 10, t: "其它属性", c: "gray", plus: true },
  { no: 22, t: "锚固搭接", c: "gray", plus: true },
  { no: 37, t: "显示样式", c: "gray", plus: true },
];

const tasks = [
  { i: "t-fan" },
  { i: "t-swirl" },
  { i: "t-edge" },
  { i: "t-store" },
  { i: "t-folder" },
  { i: "t-gred", run: true },
  { i: "t-gld", run: true, act: true },
  { i: "t-note", run: true },
  { i: "t-gblue", run: true },
  { i: "t-green", run: true },
  { i: "t-qdoc", run: true },
  { i: "t-qdoc", run: true },
];

const dlgBtns1 = ["布角筋", "布边筋", "特殊布筋", "对齐钢筋"];
const dlgBtns2 = ["修改纵筋", "修改箍筋", "编辑弯钩", "端头伸缩"];

const gridX = [640.5, 688, 735.5, 783.5, 830.5, 878.5, 925.5, 973.5, 1020.5, 1068.5, 1115.5];
const gridY = [266.5, 314.5, 362.5, 410.5, 455.5, 503.5, 550.5, 598.5, 645.5];
const barsY = [[965, 328], [1075, 328], [680, 471], [965, 471], [1075, 471], [680, 581], [965, 581], [1075, 581]];
const barsM = [[1020, 329], [965, 400], [1075, 400], [775, 471], [870, 471], [680, 526], [1075, 526], [775, 581], [870, 581], [1020, 581]];
</script>

<style>
html, body { margin: 0; padding: 0; overflow: hidden; }
</style>

<style scoped>
.app {
  position: relative;
  width: 1366px;
  height: 768px;
  overflow: hidden;
  display: flex;
  flex-direction: column;
  background: #f0f0f0;
  color: #111;
  font: 12px "Liberation Sans", "Noto Sans CJK SC", sans-serif;
}
.sprite { position: absolute; }
.ic { width: 16px; height: 16px; flex: none; }
.mono { font-family: "Liberation Mono", "Noto Sans CJK SC", monospace; font-size: 12px; letter-spacing: -1.2px; }
.tri {
  display: inline-block;
  width: 0;
  height: 0;
  margin-left: 4px;
  border: 3px solid transparent;
  border-top: 4px solid #222;
  border-bottom: 0;
  vertical-align: middle;
}
.tri.gray { border-top-color: #888; }
.tri.ml { margin-left: 8px; }
.more { font: 700 13px "Liberation Sans", sans-serif; color: #222; margin-top: -4px; }

.title-bar { height: 23px; background: #fff; display: flex; align-items: center; flex: none; }
.app-ico { width: 16px; height: 16px; margin: 0 5px 0 2px; flex: none; }
.title-text { font-size: 12.68px; color: #777; white-space: nowrap; margin-top: -1px; }
.win-btns { margin-left: auto; display: flex; gap: 38px; padding-right: 19px; }
.win-btns svg:last-child { margin-left: -5px; }

.menu-bar {
  height: 29px;
  flex: none;
  display: flex;
  align-items: center;
  gap: 10px;
  padding-left: 7px;
  white-space: nowrap;
  background: #f5f5f5;
}
.menu-ico { display: flex; align-items: center; gap: 3px; }
.gx { margin-left: -2px; }
.hint { height: 29px; width: 176px; padding-left: 26px; box-sizing: border-box; line-height: 29px; background: #fbfbfb; color: #6a3000; border-radius: 4px 4px 0 0; margin-right: 7px; }
.bell { width: 14px; height: 16px; margin-left: -3px; }
.end { margin: -4px 2px 0 auto; }

.tool-bar { height: 31px; flex: none; display: flex; align-items: center; background: #f4f4f4; border-top: 1px solid #fff; box-sizing: border-box; white-space: nowrap; padding-bottom: 3px; }
.tool-bar.second { height: 27px; background: #f2f2f2; border-top: 0; padding-bottom: 1px; }
.tb-item { display: flex; align-items: center; flex: none; height: 100%; overflow: visible; }
.tb-t { margin-left: 3px; }
.tb-item > .tb-t:first-child { margin-left: 0; }
.dis { color: #888; }
.sep { width: 1px; height: 20px; background: #c4c4c4; }
.combo-2d { width: 62px; height: 22px; box-sizing: border-box; border: 1px solid #777; display: flex; align-items: center; padding-left: 3px; gap: 3px; color: #888; }
.combo-2d .ic { width: 14px; height: 14px; }
.combo-floor { width: 63px; height: 24px; background: #fff; display: flex; align-items: center; box-sizing: border-box; padding: 0 4px 0 2px; justify-content: space-between; }

.body { flex: 1; display: flex; min-height: 0; }
.nav { width: 166px; flex: none; display: flex; flex-direction: column; }
.nav-head { height: 18px; box-sizing: border-box; border: 1px solid #aaa; border-bottom-color: #888; width: 165px; background: #f2f2f2; display: flex; align-items: center; font-size: 12px; white-space: nowrap; }
.pin { margin-left: auto; margin-right: 9px; }
.nav-head svg:last-child { margin-right: 5px; }
.nav-btn { width: 165px; height: 21px; line-height: 21px; text-align: center; background: #efefef; border: 1px solid #c8c8c8; box-sizing: border-box; margin-bottom: 1px; }
.first { margin-top: 1px; }
.tall { height: 22px; line-height: 22px; }
.nav-exp { height: 26px; width: 163px; margin-left: 1px; box-sizing: border-box; padding: 4px 0 0 6px; background: linear-gradient(#fff, #eee); }
.nav-box { height: 485px; width: 161px; margin: 1px 2px 2px; border: 1px solid #8a8a8a; box-sizing: border-box; display: grid; grid-template-columns: 1fr 16px; grid-template-rows: 1fr 16px; background: #fff; box-shadow: 0 0 0 1px #ddd; }
.nav-view { overflow: hidden; }
.groups { margin: -1px 0 0 12px; border-left: 1px dotted #777; }
.g-row { height: 16px; display: flex; align-items: center; margin-left: -6px; }
.chev { flex: none; background: #fff; }
.dots { display: inline-block; flex: none; height: 0; border-bottom: 1px dotted #777; }
.d1 { width: 7px; margin: 0 1px 0 0; }
.g-name { margin-left: 5px; }
.kids { margin-left: 19px; }
.kid { height: 16px; display: flex; align-items: center; position: relative; white-space: nowrap; }
.kid::before { content: ""; position: absolute; left: 0; top: 0; height: 100%; border-left: 1px dotted #777; }
.kid:last-child::before { height: 50%; }
.d2 { width: 9px; margin-left: 1px; }
.kid-lab { display: flex; align-items: center; height: 16px; padding-right: 1px; }
.kid-lab.sel { background: #d9d9d9; }
.kid-t { margin-left: 5px; }
.vbar { display: flex; flex-direction: column; align-items: center; background: #fff; padding-top: 4px; }
.vtrack { flex: 1; width: 15px; margin: 1px 0; padding-top: 54px; }
.vthumb { width: 15px; height: 213px; background: #c8c8c8; }
.hbar { display: flex; align-items: center; background: #f0f0f0; grid-column: 1 / 3; }
.hthumb { width: 102px; height: 16px; background: #c8c8c8; margin-right: 6px; }

.right { flex: 1; min-width: 0; display: flex; flex-direction: column; padding-left: 6px; }
.right .tool-bar { margin-left: -6px; padding-left: 10px; }
.work { flex: 1; display: flex; min-height: 0; }
.list-col { width: 183px; flex: none; display: flex; flex-direction: column; }
.search-row { height: 32px; box-sizing: border-box; padding-top: 7px; display: flex; align-items: flex-start; gap: 4px; background: #f0f0f0; }
.search { width: 157px; height: 24px; box-sizing: border-box; background: #fff; border: 1px solid #888; color: #888; padding-left: 2px; line-height: 18px; font-size: 13px; }
.list-box { flex: 1; margin-bottom: 2px; background: #fff; border: 1px solid #999; border-right: 2px solid #777; border-bottom: 2px solid #777; box-sizing: border-box; }
.root-row { height: 17px; display: flex; align-items: center; padding-left: 7px; }
.d3 { width: 5px; margin: 0 1px 0 2px; }
.root-t { margin-left: 3px; font-size: 12px; }
.az-list { margin-left: 30px; }
.az-row { height: 16px; display: flex; align-items: center; position: relative; }
.az-row::before { content: ""; position: absolute; left: 0; top: 0; height: 100%; border-left: 1px dotted #777; }
.az-row:last-child::before { height: 50%; }
.d4 { width: 8px; margin-left: 1px; }
.az-lab { display: flex; align-items: center; height: 16px; width: 57px; padding-left: 2px; box-sizing: border-box; }
.az-lab.on { background: #2e66c0; }
.az-t { margin-left: 5px; }

.props { flex: 1; margin-left: 5px; min-width: 0; display: flex; flex-direction: column; background: #fff; }
.tab-row { height: 24px; background: #f7f7f7; border-bottom: 1px solid #ccc; box-sizing: border-box; padding-left: 2px; }
.tab { width: 59px; height: 23px; line-height: 23px; padding-top: 1px; box-sizing: border-box; background: #fff; text-align: center; border-right: 1px solid #ccc; }
.props-main { flex: 1; display: flex; min-height: 0; padding: 3px 0 0 2px; }
.table { width: 982px; flex: none; border-left: 1px solid #888; }
.t-head { height: 25px; display: flex; background: linear-gradient(#fff, #eaeaea); border-bottom: 1px solid #aaa; box-sizing: border-box; }
.t-head .t-no { background: #f3f3f3; }
.t-name { width: 190px; text-align: center; line-height: 25px; }
.t-row { height: 19px; display: flex; box-sizing: border-box; border-bottom: 1px solid #aaa; }
.t-no { width: 21px; flex: none; background: #f3f3f3; text-align: center; line-height: 18px; border-right: 1px solid #bbb; font-size: 11.500px; box-sizing: content-box; }
.cur .t-no { background: #fdd79a; color: #7a4a00; }
.t-cell { flex: 1; position: relative; line-height: 18px; padding-left: 20px; }
.t-cell.sel { background: #0078d7; color: #fff; }
.blue { color: #0000ee; }
.black { color: #111; }
.gray { color: #8a8a8a; }
.plus { position: absolute; left: 2px; top: 3px; width: 11px; height: 11px; border: 1px solid #888; color: #111; line-height: 10px; text-align: center; font-size: 12px; }
.pbar { width: 15px; background: #fff; display: flex; flex-direction: column; align-items: center; padding-top: 8px; }
.pthumb { width: 15px; height: 535px; margin-top: 1px; background: #c8c8c8; }

.status { height: 21px; flex: none; display: flex; gap: 3px; background: #f0f0f0; border-top: 1px solid #ddd; box-sizing: border-box; white-space: nowrap; }
.st { background: #f5f5f5; border: 1px solid #ddd; box-sizing: border-box; height: 19px; line-height: 17px; margin-top: 1px; padding-left: 1px; }
.s0 { width: 148px; }
.s1 { width: 79px; }
.s2 { width: 97px; }
.s3 { width: 47px; }
.s4 { width: 914px; }
.s5 { width: 69px; }

.taskbar { height: 40px; flex: none; display: flex; align-items: center; background: #0c1418; color: #eee; white-space: nowrap; }
.start { width: 48px; height: 40px; background: #000; display: flex; align-items: center; justify-content: center; }
.tsearch { width: 344px; height: 40px; background: #333; display: flex; align-items: center; box-sizing: border-box; padding-left: 9px; }
.ts-text { margin-left: 5px; font-size: 14px; color: #9a9a9a; }
.mic { margin-left: auto; margin-right: 15px; }
.tasks { display: flex; margin-left: 2px; }
.task { width: 49px; height: 40px; display: flex; align-items: center; justify-content: center; box-sizing: border-box; }
.task.shift { margin-left: 4px; }
.task.run { box-shadow: inset 0 -2px 0 #76b9ed, inset 4px 0 0 #0c1418, inset -4px 0 0 #0c1418; }
.task.act { background: #333; box-shadow: inset 0 -2px 0 #76b9ed; }
.cpu { width: 60px; margin-left: 34px; display: flex; flex-direction: column; align-items: center; line-height: 17px; font-size: 12.5px; }
.tray { display: flex; align-items: center; gap: 8px; margin-left: 11px; }
.ime { font-size: 14px; font-weight: 700; margin-left: 1px; color: #fff; }
.clock { width: 72px; margin-left: 14px; display: flex; flex-direction: column; align-items: center; line-height: 19px; font-size: 13px; }
.notify { position: relative; margin-left: 30px; display: flex; }
.badge { position: absolute; left: 7px; top: 9px; width: 16px; height: 16px; border-radius: 50%; background: #444; border: 1px solid #999; box-sizing: border-box; color: #fff; font: 700 11px/14px "Liberation Sans", sans-serif; text-align: center; }

.dialog {
  position: absolute;
  left: 565px;
  top: 132px;
  width: 779px;
  height: 571px;
  box-sizing: border-box;
  border: 1px solid #333;
  background: linear-gradient(#98b4d2, #b9d1ea 30px);
  display: flex;
  flex-direction: column;
  padding: 0 7px;
}
.dlg-title { height: 30px; line-height: 38px; flex: none; }
.dlg-body { height: 508px; flex: none; background: #f2f2f2; border: 1px solid #e8eef5; box-sizing: border-box; padding: 2px 3px 0 4px; }
.dlg-tools { height: 60px; background: linear-gradient(#fff, #f0f0f0 60%); border: 1px solid #e6e6e6; box-sizing: border-box; padding: 2px 0 0 0; }
.dt-row { height: 26px; display: flex; align-items: center; gap: 10px; white-space: nowrap; }
.dt-row + .dt-row { height: 28px; }
.grip { width: 2px; height: 18px; margin-right: -2px; border-left: 2px dotted #bbb; box-sizing: border-box; }
.dt-on { border: 1px solid #3a8ee0; background: #e3eff9; padding: 2px 3px; margin: 0 -4px; }
.dt-sep { width: 1px; height: 20px; background: #bbb; margin-right: -4px; }
.dt-dis { color: #999; }
.bar-combo { width: 135px; height: 25px; margin-left: -10px; box-sizing: border-box; border: 1px solid #3a8ee0; background: #fff; display: flex; justify-content: space-between; align-items: center; padding-left: 2px; font-size: 13px; }
.bc-drop { width: 12px; height: 23px; background: #dbe7f3; display: flex; align-items: center; justify-content: center; }
.bc-drop .tri { margin: 0; }
.canvas { position: relative; width: 754px; height: 442px; box-sizing: border-box; border: 2px solid #f00; background: #000; }
.draw { display: block; width: 750px; height: 438px; }
.popup { position: absolute; left: 8px; top: 3px; width: 199px; height: 54px; background: #fff; padding-top: 7px; box-sizing: border-box; border: 1px solid #333; border-top: 0; }
.pop-title { height: 20px; line-height: 20px; background: #a0a0a0; color: #e4e4e4; padding-left: 3px; }
.pop-row { height: 26px; background: #f0f0f0; display: flex; align-items: center; padding-left: 5px; white-space: nowrap; }
.pop-on { border: 1px solid #3a8ee0; background: #e3eff9; padding: 2px 4px; margin-left: 5px; }
.pop-arc { margin-left: 6px; }
.pop-row > .tri { margin-left: 6px; }
.pop-combo { margin-left: 5px; width: 58px; height: 22px; border: 1px solid #888; box-sizing: border-box; background: #f4f4f4; display: flex; align-items: center; justify-content: flex-end; padding-right: 3px; }
.dlg-status { display: flex; gap: 3px; margin-top: 4px; height: 20px; flex: none; white-space: nowrap; }
.ds-a { width: 146px; height: 20px; background: #f2f2f2; box-sizing: border-box; border: 1px solid #e0e0e0; line-height: 18px; padding-left: 6px; }
.ds-b { flex: 1; height: 20px; background: #f2f2f2; box-sizing: border-box; border: 1px solid #e0e0e0; line-height: 18px; padding-left: 1px; }

.marks { position: absolute; left: 0; top: 0; pointer-events: none; }
.ime-bump { position: absolute; left: 1077px; top: 0; width: 48px; height: 4px; background: #4bc24b; border-radius: 0 0 6px 6px; box-shadow: 0 0 0 2px #ddd; }
.ime-bar { position: absolute; left: 1028px; top: 3px; width: 156px; height: 24px; box-sizing: border-box; background: #f8fbfe; border: 1px solid #cfe0ee; display: flex; align-items: center; gap: 10px; padding-left: 6px; }
.ime-s { position: absolute; left: -29px; top: -1px; }
.ime-en { color: #1a78c8; font-weight: 700; font-size: 14px; }
.ime-dot { color: #1a78c8; font-weight: 700; width: 10px; }
</style>
